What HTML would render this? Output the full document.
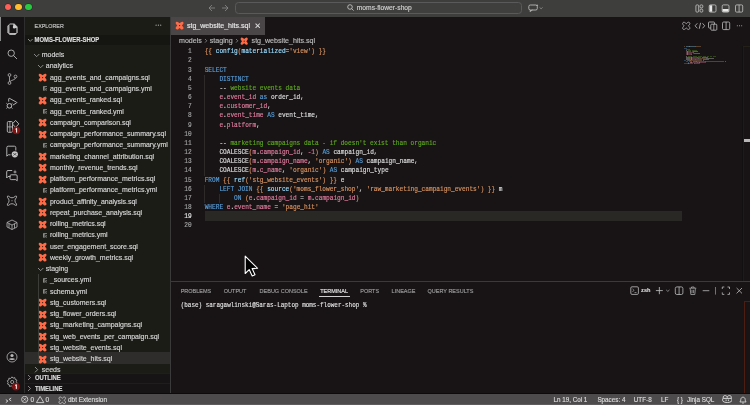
<!DOCTYPE html><html><head><meta charset="utf-8"><style>html,body{margin:0;padding:0;width:750px;height:405px;overflow:hidden;background:#181415;}body{position:relative;font-family:"Liberation Sans", sans-serif;}#root{position:absolute;left:0;top:0;width:750px;height:405px;overflow:hidden;will-change:transform}</style></head><body><div id="root"><div style="position:absolute;left:0px;top:0px;width:750px;height:17px;background:#3e3e3c;"></div><div style="position:absolute;left:4.8px;top:3.9000000000000004px;width:6.6px;height:6.6px;border-radius:50%;background:#fe5f57;box-shadow:0 0 0 0.5px rgba(0,0,0,0.35)"></div><div style="position:absolute;left:15.099999999999998px;top:3.9000000000000004px;width:6.6px;height:6.6px;border-radius:50%;background:#febc2e;box-shadow:0 0 0 0.5px rgba(0,0,0,0.35)"></div><div style="position:absolute;left:25.2px;top:3.9000000000000004px;width:6.6px;height:6.6px;border-radius:50%;background:#28c840;box-shadow:0 0 0 0.5px rgba(0,0,0,0.35)"></div><svg style="position:absolute;left:208px;top:4px" width="22" height="8" viewBox="0 0 22 8"><path d="M1,4 H7 M1,4 L4,1 M1,4 L4,7" stroke="#8a8a8a" stroke-width="0.8" fill="none"/><path d="M14,4 H20 M20,4 L17,1 M20,4 L17,7" stroke="#8a8a8a" stroke-width="0.8" fill="none"/></svg><div style="position:absolute;left:235.2px;top:1.5px;width:287px;height:12.1px;box-sizing:border-box;border:0.7px solid #5a5a5a;border-radius:3.5px;background:#3f3f3e"></div><svg style="position:absolute;left:347px;top:4.2px" width="7" height="7" viewBox="0 0 7 7"><circle cx="3" cy="3" r="2.3" stroke="#cfcfcf" stroke-width="0.8" fill="none"/><path d="M4.7,4.7 L6.6,6.6" stroke="#cfcfcf" stroke-width="0.8"/></svg><div style="position:absolute;left:356.8px;top:1.0px;height:13.4px;line-height:13.4px;font-family:'Liberation Sans', sans-serif;font-size:6.7px;color:#d0d0d0;font-weight:normal;white-space:pre;-webkit-text-stroke:0.15px #d0d0d0;">moms-flower-shop</div><svg style="position:absolute;left:527.5px;top:4px" width="16" height="8" viewBox="0 0 16 8"><rect x="0.8" y="1" width="8.5" height="5" rx="1.5" stroke="#c8c8c8" stroke-width="0.8" fill="none"/><path d="M2.5,6 L2,7.6 L4.5,6" stroke="#c8c8c8" stroke-width="0.7" fill="none"/><path d="M11.6,3.4 L13.1,4.8 L14.6,3.4" stroke="#b8b8b8" stroke-width="0.55" fill="none"/><path d="M9.2,0.2 L9.5,1 L10.3,1.3 L9.5,1.6 L9.2,2.4 L8.9,1.6 L8.1,1.3 L8.9,1 Z" fill="#d0d0d0"/></svg><svg style="position:absolute;left:695px;top:3.5px" width="50" height="9" viewBox="0 0 50 9"><rect x="0.9" y="0.9" width="2.8" height="7.2" rx="1" stroke="#c8c8c8" stroke-width="0.8" fill="none"/><rect x="5" y="0.9" width="2.8" height="3" rx="1" stroke="#c8c8c8" stroke-width="0.8" fill="none"/><rect x="5" y="5.1" width="2.8" height="3" rx="1" stroke="#c8c8c8" stroke-width="0.8" fill="none"/><rect x="14.2" y="0.9" width="6.8" height="7.2" rx="1.2" stroke="#c8c8c8" stroke-width="0.8" fill="none"/><rect x="14.6" y="1.3" width="2.6" height="6.4" fill="#e8e8e8"/><rect x="27.2" y="0.9" width="6.8" height="7.2" rx="1.2" stroke="#c8c8c8" stroke-width="0.8" fill="none"/><rect x="27.6" y="5" width="6" height="2.7" fill="#e8e8e8"/><rect x="40.5" y="0.9" width="7.2" height="7.2" rx="1.2" stroke="#c8c8c8" stroke-width="0.8" fill="none"/><path d="M44.1,1 V8" stroke="#c8c8c8" stroke-width="0.8"/></svg><div style="position:absolute;left:0px;top:17px;width:24px;height:377px;background:#171415;"></div><div style="position:absolute;left:24px;top:17px;width:0.8px;height:377px;background:#2e2e2e;"></div><div style="position:absolute;left:0px;top:17px;width:0.9px;height:24px;background:#8c8c8c;"></div><svg style="position:absolute;left:7px;top:22.5px" width="11" height="12.5" viewBox="0 0 11 12.5"><path d="M3,0.5 H7.3 L10.6,3.8 V9.6 L8,12.2 H3 L0.4,9.6 V3.1 Z" fill="#c4c4c4"/><path d="M2.4,1.6 H6.2 V5 H9.4 V9.9 H2.4 Z" fill="#171415"/><circle cx="7.3" cy="3.9" r="1.5" fill="#d0d0d0"/><path d="M1.6,3 V9.6 L3.2,11.1 H7.6" stroke="#8a8a8a" stroke-width="0.5" fill="none"/></svg><svg style="position:absolute;left:7px;top:49px" width="11" height="11" viewBox="0 0 11 11"><circle cx="4.2" cy="4.2" r="3.2" stroke="#b8b8b8" stroke-width="0.9" fill="none"/><path d="M6.5,6.5 L10,10" stroke="#b8b8b8" stroke-width="0.9"/></svg><svg style="position:absolute;left:7px;top:73px" width="11" height="12" viewBox="0 0 11 12"><circle cx="2.5" cy="2" r="1.4" stroke="#b8b8b8" stroke-width="0.8" fill="none"/><circle cx="2.5" cy="10" r="1.4" stroke="#b8b8b8" stroke-width="0.8" fill="none"/><circle cx="8.5" cy="3.5" r="1.4" stroke="#b8b8b8" stroke-width="0.8" fill="none"/><path d="M2.5,3.4 V8.6 M8.5,4.9 C8.5,7 4,7 2.8,8.7" stroke="#b8b8b8" stroke-width="0.8" fill="none"/></svg><svg style="position:absolute;left:0px;top:92px" width="24" height="20" viewBox="0 0 24 20"><path d="M8.7,9.6 V7 Q8.7,5.8 9.8,6.5 L16.5,10.2 Q17.2,10.6 16.5,11 L12.8,13.1" stroke="#b8b8b8" stroke-width="0.95" fill="none"/><circle cx="9.4" cy="13.8" r="2.3" stroke="#b8b8b8" stroke-width="1" fill="none"/><path d="M6.3,11.2 L7.6,12.3 M12.5,11.2 L11.2,12.3 M6.3,16.5 L7.6,15.4 M12.5,16.5 L11.2,15.4" stroke="#b8b8b8" stroke-width="0.8"/></svg><svg style="position:absolute;left:0px;top:117px" width="24" height="20" viewBox="0 0 24 20"><rect x="7.3" y="4.5" width="5.2" height="10.8" rx="1.2" stroke="#b8b8b8" stroke-width="0.95" fill="none"/><path d="M7.3,9.9 H12.5 M9.9,4.5 V15.3" stroke="#b8b8b8" stroke-width="0.8"/><path d="M15.6,3.4 L18.8,6.9 L15.6,10.4 L12.4,6.9 Z" stroke="#b8b8b8" stroke-width="0.95" fill="#171415"/><circle cx="16.3" cy="13.3" r="3.9" fill="#801212"/><path d="M15.4,12.2 L16.6,11.3 V15.6" stroke="#ffffff" stroke-width="1" fill="none"/></svg><svg style="position:absolute;left:0px;top:141px" width="24" height="20" viewBox="0 0 24 20"><path d="M10.5,13.8 H8.2 L6.8,15.2 V6.6 Q6.8,5.2 8.2,5.2 H14.4 Q15.8,5.2 15.8,6.6 V9.5" stroke="#b8b8b8" stroke-width="0.95" fill="none"/><circle cx="14.8" cy="13.3" r="3.1" fill="#c8c8c8"/><path d="M13.4,12.1 L14.6,13.3 L13.4,14.5 M16.2,12.1 L15,13.3 L16.2,14.5" stroke="#171415" stroke-width="0.7" fill="none"/></svg><svg style="position:absolute;left:0px;top:165px" width="24" height="20" viewBox="0 0 24 20"><path d="M10.5,11.5 H8 L6.7,13 V6.8 Q6.7,5.5 8,5.5 H12.2" stroke="#b8b8b8" stroke-width="0.95" fill="none"/><path d="M11.2,9.8 H16 Q17.2,9.8 17.2,11 V15.8 L15.8,14.6 H11.2 Q10,14.6 10,13.4 V11 Q10,9.8 11.2,9.8 Z" stroke="#b8b8b8" stroke-width="0.95" fill="none"/><path d="M15,4.6 L15.5,6.4 L17.2,6.9 L15.5,7.4 L15,9.1 L14.5,7.4 L12.8,6.9 L14.5,6.4 Z" fill="#b8b8b8"/></svg><svg style="position:absolute;left:6.3px;top:194.6px" width="12" height="11.5" viewBox="-0.2 -0.2 10.4 10.4"><path d="M2,0.9 Q5,3.8 8,0.9 Q9.7,0.3 9.1,2 Q6.2,5 9.1,8 Q9.7,9.7 8,9.1 Q5,6.2 2,9.1 Q0.3,9.7 0.9,8 Q3.8,5 0.9,2 Q0.3,0.3 2,0.9 Z" stroke="#b8b8b8" stroke-width="0.8" fill="none"/><circle cx="5" cy="5" r="0.55" fill="#b8b8b8"/></svg><svg style="position:absolute;left:6px;top:219px" width="12" height="11" viewBox="0 0 12 11"><path d="M1,3.5 L6,1 L11,3.5 V8 L6,10.5 L1,8 Z M1,3.5 L6,6 L11,3.5 M6,6 V10.5 M3,4.5 V9 M8.5,4.8 V9.2" stroke="#b8b8b8" stroke-width="0.8" fill="none"/></svg><svg style="position:absolute;left:6px;top:351px" width="12" height="12" viewBox="0 0 12 12"><circle cx="6" cy="6" r="5" stroke="#b8b8b8" stroke-width="0.8" fill="none"/><circle cx="6" cy="4.5" r="1.6" fill="#b8b8b8"/><path d="M3,8.2 C3.5,6.8 8.5,6.8 9,8.2 C8,9.2 4,9.2 3,8.2 Z" fill="#b8b8b8"/></svg><svg style="position:absolute;left:5.5px;top:375.5px" width="12" height="12" viewBox="0 0 12 12"><path d="M6,0.8 L7,2.2 L8.8,1.6 L9.2,3.4 L10.9,4.1 L10.2,5.8 L11.2,7.2 L9.6,8.1 L9.5,9.9 L7.7,9.6 L6.6,11.1 L5.3,9.9 L3.6,10.5 L3.2,8.7 L1.5,8 L2.2,6.3 L1.2,4.9 L2.8,4 L2.9,2.2 L4.7,2.5 Z" stroke="#b8b8b8" stroke-width="0.8" fill="none"/><circle cx="6.2" cy="6" r="1.6" stroke="#b8b8b8" stroke-width="0.8" fill="none"/></svg><svg style="position:absolute;left:0px;top:376px" width="24" height="18" viewBox="0 0 24 18"><circle cx="16" cy="10.6" r="3.9" fill="#801212"/><path d="M15.1,9.5 L16.3,8.6 V12.9" stroke="#ffffff" stroke-width="1" fill="none"/></svg><div style="position:absolute;left:24.8px;top:17px;width:145.7px;height:377px;background:#1c1c17;"></div><div style="position:absolute;left:34.6px;top:20.94px;height:10.72px;line-height:10.72px;font-family:'Liberation Sans', sans-serif;font-size:5.36px;color:#c0c0c0;font-weight:normal;white-space:pre;-webkit-text-stroke:0.15px #c0c0c0;transform:scaleY(1.15)">EXPLORER</div><svg style="position:absolute;left:155px;top:24.4px" width="7" height="2.4" viewBox="0 0 7 2.4"><circle cx="1.1" cy="1.2" r="0.6" fill="#b0b0b0"/><circle cx="3.4" cy="1.2" r="0.6" fill="#b0b0b0"/><circle cx="5.7" cy="1.2" r="0.6" fill="#b0b0b0"/></svg><div style="position:absolute;left:24.8px;top:35.3px;width:145.7px;height:9.6px;background:#151512;"></div><svg style="position:absolute;left:27.6px;top:39.3px;overflow:visible" width="4.6" height="2.3" viewBox="0 0 4.6 2.3"><polyline points="0,0 2.3,2.3 4.6,0" fill="none" stroke="#c0c0c0" stroke-width="0.7"/></svg><div style="position:absolute;left:34.6px;top:35.18px;height:11.84px;line-height:11.84px;font-family:'Liberation Sans', sans-serif;font-size:5.92px;color:#dcdcdc;font-weight:bold;white-space:pre;-webkit-text-stroke:0.15px #dcdcdc;transform:scaleY(1.18)">MOMS-FLOWER-SHOP</div><svg style="position:absolute;left:33.599999999999994px;top:53.7px;overflow:visible" width="5.3" height="2.65" viewBox="0 0 5.3 2.65"><polyline points="0,0 2.65,2.65 5.3,0" fill="none" stroke="#b8b8b8" stroke-width="0.7"/></svg><div style="position:absolute;left:41.8px;top:48.230000000000004px;height:13.94px;line-height:13.94px;font-family:'Liberation Sans', sans-serif;font-size:6.97px;color:#d6d6d6;font-weight:normal;white-space:pre;-webkit-text-stroke:0.15px #d6d6d6;">models</div><svg style="position:absolute;left:37.55px;top:64.96000000000001px;overflow:visible" width="5.3" height="2.65" viewBox="0 0 5.3 2.65"><polyline points="0,0 2.65,2.65 5.3,0" fill="none" stroke="#b8b8b8" stroke-width="0.7"/></svg><div style="position:absolute;left:45.75px;top:59.49000000000001px;height:13.94px;line-height:13.94px;font-family:'Liberation Sans', sans-serif;font-size:6.97px;color:#d6d6d6;font-weight:normal;white-space:pre;-webkit-text-stroke:0.15px #d6d6d6;">analytics</div><svg style="position:absolute;left:38.3px;top:73.22px" width="9.2" height="9.2" viewBox="0 0 10 10"><path d="M1.2,1.2 C2.4,0 3.6,1.2 5,2.5 C6.4,1.2 7.6,0 8.8,1.2 C10,2.4 8.8,3.6 7.5,5 C8.8,6.4 10,7.6 8.8,8.8 C7.6,10 6.4,8.8 5,7.5 C3.6,8.8 2.4,10 1.2,8.8 C0,7.6 1.2,6.4 2.5,5 C1.2,3.6 0,2.4 1.2,1.2 Z" fill="#ff6b47"/><circle cx="5" cy="5" r="0.7" fill="#3a1a10"/></svg><div style="position:absolute;left:49.9px;top:70.75px;height:13.94px;line-height:13.94px;font-family:'Liberation Sans', sans-serif;font-size:6.97px;color:#d6d6d6;font-weight:normal;white-space:pre;-webkit-text-stroke:0.15px #d6d6d6;">agg_events_and_campaigns.sql</div><svg style="position:absolute;left:42.8px;top:86.38000000000001px" width="4.4" height="5" viewBox="0 0 4.4 5"><path d="M0.4,0.5 H4 M0.4,1.7 H2.2 M0.4,2.9 H2 M0.4,4.1 H2.2 M0.5,0.5 V4.5" stroke="#a8a8a8" stroke-width="0.7" fill="none"/><circle cx="3.3" cy="3.4" r="0.9" stroke="#a8a8a8" stroke-width="0.6" fill="none"/></svg><div style="position:absolute;left:49.9px;top:82.01px;height:13.94px;line-height:13.94px;font-family:'Liberation Sans', sans-serif;font-size:6.97px;color:#d6d6d6;font-weight:normal;white-space:pre;-webkit-text-stroke:0.15px #d6d6d6;">agg_events_and_campaigns.yml</div><svg style="position:absolute;left:38.3px;top:95.74000000000001px" width="9.2" height="9.2" viewBox="0 0 10 10"><path d="M1.2,1.2 C2.4,0 3.6,1.2 5,2.5 C6.4,1.2 7.6,0 8.8,1.2 C10,2.4 8.8,3.6 7.5,5 C8.8,6.4 10,7.6 8.8,8.8 C7.6,10 6.4,8.8 5,7.5 C3.6,8.8 2.4,10 1.2,8.8 C0,7.6 1.2,6.4 2.5,5 C1.2,3.6 0,2.4 1.2,1.2 Z" fill="#ff6b47"/><circle cx="5" cy="5" r="0.7" fill="#3a1a10"/></svg><div style="position:absolute;left:49.9px;top:93.27000000000001px;height:13.94px;line-height:13.94px;font-family:'Liberation Sans', sans-serif;font-size:6.97px;color:#d6d6d6;font-weight:normal;white-space:pre;-webkit-text-stroke:0.15px #d6d6d6;">agg_events_ranked.sql</div><svg style="position:absolute;left:42.8px;top:108.9px" width="4.4" height="5" viewBox="0 0 4.4 5"><path d="M0.4,0.5 H4 M0.4,1.7 H2.2 M0.4,2.9 H2 M0.4,4.1 H2.2 M0.5,0.5 V4.5" stroke="#a8a8a8" stroke-width="0.7" fill="none"/><circle cx="3.3" cy="3.4" r="0.9" stroke="#a8a8a8" stroke-width="0.6" fill="none"/></svg><div style="position:absolute;left:49.9px;top:104.53px;height:13.94px;line-height:13.94px;font-family:'Liberation Sans', sans-serif;font-size:6.97px;color:#d6d6d6;font-weight:normal;white-space:pre;-webkit-text-stroke:0.15px #d6d6d6;">agg_events_ranked.yml</div><svg style="position:absolute;left:38.3px;top:118.26px" width="9.2" height="9.2" viewBox="0 0 10 10"><path d="M1.2,1.2 C2.4,0 3.6,1.2 5,2.5 C6.4,1.2 7.6,0 8.8,1.2 C10,2.4 8.8,3.6 7.5,5 C8.8,6.4 10,7.6 8.8,8.8 C7.6,10 6.4,8.8 5,7.5 C3.6,8.8 2.4,10 1.2,8.8 C0,7.6 1.2,6.4 2.5,5 C1.2,3.6 0,2.4 1.2,1.2 Z" fill="#ff6b47"/><circle cx="5" cy="5" r="0.7" fill="#3a1a10"/></svg><div style="position:absolute;left:49.9px;top:115.79px;height:13.94px;line-height:13.94px;font-family:'Liberation Sans', sans-serif;font-size:6.97px;color:#d6d6d6;font-weight:normal;white-space:pre;-webkit-text-stroke:0.15px #d6d6d6;">campaign_comparison.sql</div><svg style="position:absolute;left:38.3px;top:129.51999999999998px" width="9.2" height="9.2" viewBox="0 0 10 10"><path d="M1.2,1.2 C2.4,0 3.6,1.2 5,2.5 C6.4,1.2 7.6,0 8.8,1.2 C10,2.4 8.8,3.6 7.5,5 C8.8,6.4 10,7.6 8.8,8.8 C7.6,10 6.4,8.8 5,7.5 C3.6,8.8 2.4,10 1.2,8.8 C0,7.6 1.2,6.4 2.5,5 C1.2,3.6 0,2.4 1.2,1.2 Z" fill="#ff6b47"/><circle cx="5" cy="5" r="0.7" fill="#3a1a10"/></svg><div style="position:absolute;left:49.9px;top:127.04999999999998px;height:13.94px;line-height:13.94px;font-family:'Liberation Sans', sans-serif;font-size:6.97px;color:#d6d6d6;font-weight:normal;white-space:pre;-webkit-text-stroke:0.15px #d6d6d6;">campaign_performance_summary.sql</div><svg style="position:absolute;left:42.8px;top:142.68px" width="4.4" height="5" viewBox="0 0 4.4 5"><path d="M0.4,0.5 H4 M0.4,1.7 H2.2 M0.4,2.9 H2 M0.4,4.1 H2.2 M0.5,0.5 V4.5" stroke="#a8a8a8" stroke-width="0.7" fill="none"/><circle cx="3.3" cy="3.4" r="0.9" stroke="#a8a8a8" stroke-width="0.6" fill="none"/></svg><div style="position:absolute;left:49.9px;top:138.31px;height:13.94px;line-height:13.94px;font-family:'Liberation Sans', sans-serif;font-size:6.97px;color:#d6d6d6;font-weight:normal;white-space:pre;-webkit-text-stroke:0.15px #d6d6d6;">campaign_performance_summary.yml</div><svg style="position:absolute;left:38.3px;top:152.04000000000002px" width="9.2" height="9.2" viewBox="0 0 10 10"><path d="M1.2,1.2 C2.4,0 3.6,1.2 5,2.5 C6.4,1.2 7.6,0 8.8,1.2 C10,2.4 8.8,3.6 7.5,5 C8.8,6.4 10,7.6 8.8,8.8 C7.6,10 6.4,8.8 5,7.5 C3.6,8.8 2.4,10 1.2,8.8 C0,7.6 1.2,6.4 2.5,5 C1.2,3.6 0,2.4 1.2,1.2 Z" fill="#ff6b47"/><circle cx="5" cy="5" r="0.7" fill="#3a1a10"/></svg><div style="position:absolute;left:49.9px;top:149.57000000000002px;height:13.94px;line-height:13.94px;font-family:'Liberation Sans', sans-serif;font-size:6.97px;color:#d6d6d6;font-weight:normal;white-space:pre;-webkit-text-stroke:0.15px #d6d6d6;">marketing_channel_attribution.sql</div><svg style="position:absolute;left:38.3px;top:163.3px" width="9.2" height="9.2" viewBox="0 0 10 10"><path d="M1.2,1.2 C2.4,0 3.6,1.2 5,2.5 C6.4,1.2 7.6,0 8.8,1.2 C10,2.4 8.8,3.6 7.5,5 C8.8,6.4 10,7.6 8.8,8.8 C7.6,10 6.4,8.8 5,7.5 C3.6,8.8 2.4,10 1.2,8.8 C0,7.6 1.2,6.4 2.5,5 C1.2,3.6 0,2.4 1.2,1.2 Z" fill="#ff6b47"/><circle cx="5" cy="5" r="0.7" fill="#3a1a10"/></svg><div style="position:absolute;left:49.9px;top:160.83px;height:13.94px;line-height:13.94px;font-family:'Liberation Sans', sans-serif;font-size:6.97px;color:#d6d6d6;font-weight:normal;white-space:pre;-webkit-text-stroke:0.15px #d6d6d6;">monthly_revenue_trends.sql</div><svg style="position:absolute;left:38.3px;top:174.56px" width="9.2" height="9.2" viewBox="0 0 10 10"><path d="M1.2,1.2 C2.4,0 3.6,1.2 5,2.5 C6.4,1.2 7.6,0 8.8,1.2 C10,2.4 8.8,3.6 7.5,5 C8.8,6.4 10,7.6 8.8,8.8 C7.6,10 6.4,8.8 5,7.5 C3.6,8.8 2.4,10 1.2,8.8 C0,7.6 1.2,6.4 2.5,5 C1.2,3.6 0,2.4 1.2,1.2 Z" fill="#ff6b47"/><circle cx="5" cy="5" r="0.7" fill="#3a1a10"/></svg><div style="position:absolute;left:49.9px;top:172.09px;height:13.94px;line-height:13.94px;font-family:'Liberation Sans', sans-serif;font-size:6.97px;color:#d6d6d6;font-weight:normal;white-space:pre;-webkit-text-stroke:0.15px #d6d6d6;">platform_performance_metrics.sql</div><svg style="position:absolute;left:42.8px;top:187.72px" width="4.4" height="5" viewBox="0 0 4.4 5"><path d="M0.4,0.5 H4 M0.4,1.7 H2.2 M0.4,2.9 H2 M0.4,4.1 H2.2 M0.5,0.5 V4.5" stroke="#a8a8a8" stroke-width="0.7" fill="none"/><circle cx="3.3" cy="3.4" r="0.9" stroke="#a8a8a8" stroke-width="0.6" fill="none"/></svg><div style="position:absolute;left:49.9px;top:183.35px;height:13.94px;line-height:13.94px;font-family:'Liberation Sans', sans-serif;font-size:6.97px;color:#d6d6d6;font-weight:normal;white-space:pre;-webkit-text-stroke:0.15px #d6d6d6;">platform_performance_metrics.yml</div><svg style="position:absolute;left:38.3px;top:197.07999999999998px" width="9.2" height="9.2" viewBox="0 0 10 10"><path d="M1.2,1.2 C2.4,0 3.6,1.2 5,2.5 C6.4,1.2 7.6,0 8.8,1.2 C10,2.4 8.8,3.6 7.5,5 C8.8,6.4 10,7.6 8.8,8.8 C7.6,10 6.4,8.8 5,7.5 C3.6,8.8 2.4,10 1.2,8.8 C0,7.6 1.2,6.4 2.5,5 C1.2,3.6 0,2.4 1.2,1.2 Z" fill="#ff6b47"/><circle cx="5" cy="5" r="0.7" fill="#3a1a10"/></svg><div style="position:absolute;left:49.9px;top:194.60999999999999px;height:13.94px;line-height:13.94px;font-family:'Liberation Sans', sans-serif;font-size:6.97px;color:#d6d6d6;font-weight:normal;white-space:pre;-webkit-text-stroke:0.15px #d6d6d6;">product_affinity_analysis.sql</div><svg style="position:absolute;left:38.3px;top:208.33999999999997px" width="9.2" height="9.2" viewBox="0 0 10 10"><path d="M1.2,1.2 C2.4,0 3.6,1.2 5,2.5 C6.4,1.2 7.6,0 8.8,1.2 C10,2.4 8.8,3.6 7.5,5 C8.8,6.4 10,7.6 8.8,8.8 C7.6,10 6.4,8.8 5,7.5 C3.6,8.8 2.4,10 1.2,8.8 C0,7.6 1.2,6.4 2.5,5 C1.2,3.6 0,2.4 1.2,1.2 Z" fill="#ff6b47"/><circle cx="5" cy="5" r="0.7" fill="#3a1a10"/></svg><div style="position:absolute;left:49.9px;top:205.86999999999998px;height:13.94px;line-height:13.94px;font-family:'Liberation Sans', sans-serif;font-size:6.97px;color:#d6d6d6;font-weight:normal;white-space:pre;-webkit-text-stroke:0.15px #d6d6d6;">repeat_purchase_analysis.sql</div><svg style="position:absolute;left:38.3px;top:219.60000000000002px" width="9.2" height="9.2" viewBox="0 0 10 10"><path d="M1.2,1.2 C2.4,0 3.6,1.2 5,2.5 C6.4,1.2 7.6,0 8.8,1.2 C10,2.4 8.8,3.6 7.5,5 C8.8,6.4 10,7.6 8.8,8.8 C7.6,10 6.4,8.8 5,7.5 C3.6,8.8 2.4,10 1.2,8.8 C0,7.6 1.2,6.4 2.5,5 C1.2,3.6 0,2.4 1.2,1.2 Z" fill="#ff6b47"/><circle cx="5" cy="5" r="0.7" fill="#3a1a10"/></svg><div style="position:absolute;left:49.9px;top:217.13000000000002px;height:13.94px;line-height:13.94px;font-family:'Liberation Sans', sans-serif;font-size:6.97px;color:#d6d6d6;font-weight:normal;white-space:pre;-webkit-text-stroke:0.15px #d6d6d6;">rolling_metrics.sql</div><svg style="position:absolute;left:42.8px;top:232.76000000000002px" width="4.4" height="5" viewBox="0 0 4.4 5"><path d="M0.4,0.5 H4 M0.4,1.7 H2.2 M0.4,2.9 H2 M0.4,4.1 H2.2 M0.5,0.5 V4.5" stroke="#a8a8a8" stroke-width="0.7" fill="none"/><circle cx="3.3" cy="3.4" r="0.9" stroke="#a8a8a8" stroke-width="0.6" fill="none"/></svg><div style="position:absolute;left:49.9px;top:228.39000000000001px;height:13.94px;line-height:13.94px;font-family:'Liberation Sans', sans-serif;font-size:6.97px;color:#d6d6d6;font-weight:normal;white-space:pre;-webkit-text-stroke:0.15px #d6d6d6;">rolling_metrics.yml</div><svg style="position:absolute;left:38.3px;top:242.12px" width="9.2" height="9.2" viewBox="0 0 10 10"><path d="M1.2,1.2 C2.4,0 3.6,1.2 5,2.5 C6.4,1.2 7.6,0 8.8,1.2 C10,2.4 8.8,3.6 7.5,5 C8.8,6.4 10,7.6 8.8,8.8 C7.6,10 6.4,8.8 5,7.5 C3.6,8.8 2.4,10 1.2,8.8 C0,7.6 1.2,6.4 2.5,5 C1.2,3.6 0,2.4 1.2,1.2 Z" fill="#ff6b47"/><circle cx="5" cy="5" r="0.7" fill="#3a1a10"/></svg><div style="position:absolute;left:49.9px;top:239.65px;height:13.94px;line-height:13.94px;font-family:'Liberation Sans', sans-serif;font-size:6.97px;color:#d6d6d6;font-weight:normal;white-space:pre;-webkit-text-stroke:0.15px #d6d6d6;">user_engagement_score.sql</div><svg style="position:absolute;left:38.3px;top:253.38px" width="9.2" height="9.2" viewBox="0 0 10 10"><path d="M1.2,1.2 C2.4,0 3.6,1.2 5,2.5 C6.4,1.2 7.6,0 8.8,1.2 C10,2.4 8.8,3.6 7.5,5 C8.8,6.4 10,7.6 8.8,8.8 C7.6,10 6.4,8.8 5,7.5 C3.6,8.8 2.4,10 1.2,8.8 C0,7.6 1.2,6.4 2.5,5 C1.2,3.6 0,2.4 1.2,1.2 Z" fill="#ff6b47"/><circle cx="5" cy="5" r="0.7" fill="#3a1a10"/></svg><div style="position:absolute;left:49.9px;top:250.91px;height:13.94px;line-height:13.94px;font-family:'Liberation Sans', sans-serif;font-size:6.97px;color:#d6d6d6;font-weight:normal;white-space:pre;-webkit-text-stroke:0.15px #d6d6d6;">weekly_growth_metrics.sql</div><svg style="position:absolute;left:37.55px;top:267.64px;overflow:visible" width="5.3" height="2.65" viewBox="0 0 5.3 2.65"><polyline points="0,0 2.65,2.65 5.3,0" fill="none" stroke="#b8b8b8" stroke-width="0.7"/></svg><div style="position:absolute;left:45.75px;top:262.16999999999996px;height:13.94px;line-height:13.94px;font-family:'Liberation Sans', sans-serif;font-size:6.97px;color:#d6d6d6;font-weight:normal;white-space:pre;-webkit-text-stroke:0.15px #d6d6d6;">staging</div><svg style="position:absolute;left:42.8px;top:277.79999999999995px" width="4.4" height="5" viewBox="0 0 4.4 5"><path d="M0.4,0.5 H4 M0.4,1.7 H2.2 M0.4,2.9 H2 M0.4,4.1 H2.2 M0.5,0.5 V4.5" stroke="#a8a8a8" stroke-width="0.7" fill="none"/><circle cx="3.3" cy="3.4" r="0.9" stroke="#a8a8a8" stroke-width="0.6" fill="none"/></svg><div style="position:absolute;left:49.9px;top:273.42999999999995px;height:13.94px;line-height:13.94px;font-family:'Liberation Sans', sans-serif;font-size:6.97px;color:#d6d6d6;font-weight:normal;white-space:pre;-webkit-text-stroke:0.15px #d6d6d6;">_sources.yml</div><svg style="position:absolute;left:42.8px;top:289.06px" width="4.4" height="5" viewBox="0 0 4.4 5"><path d="M0.4,0.5 H4 M0.4,1.7 H2.2 M0.4,2.9 H2 M0.4,4.1 H2.2 M0.5,0.5 V4.5" stroke="#a8a8a8" stroke-width="0.7" fill="none"/><circle cx="3.3" cy="3.4" r="0.9" stroke="#a8a8a8" stroke-width="0.6" fill="none"/></svg><div style="position:absolute;left:49.9px;top:284.69px;height:13.94px;line-height:13.94px;font-family:'Liberation Sans', sans-serif;font-size:6.97px;color:#d6d6d6;font-weight:normal;white-space:pre;-webkit-text-stroke:0.15px #d6d6d6;">schema.yml</div><svg style="position:absolute;left:38.3px;top:298.42px" width="9.2" height="9.2" viewBox="0 0 10 10"><path d="M1.2,1.2 C2.4,0 3.6,1.2 5,2.5 C6.4,1.2 7.6,0 8.8,1.2 C10,2.4 8.8,3.6 7.5,5 C8.8,6.4 10,7.6 8.8,8.8 C7.6,10 6.4,8.8 5,7.5 C3.6,8.8 2.4,10 1.2,8.8 C0,7.6 1.2,6.4 2.5,5 C1.2,3.6 0,2.4 1.2,1.2 Z" fill="#ff6b47"/><circle cx="5" cy="5" r="0.7" fill="#3a1a10"/></svg><div style="position:absolute;left:49.9px;top:295.95px;height:13.94px;line-height:13.94px;font-family:'Liberation Sans', sans-serif;font-size:6.97px;color:#d6d6d6;font-weight:normal;white-space:pre;-webkit-text-stroke:0.15px #d6d6d6;">stg_customers.sql</div><svg style="position:absolute;left:38.3px;top:309.68px" width="9.2" height="9.2" viewBox="0 0 10 10"><path d="M1.2,1.2 C2.4,0 3.6,1.2 5,2.5 C6.4,1.2 7.6,0 8.8,1.2 C10,2.4 8.8,3.6 7.5,5 C8.8,6.4 10,7.6 8.8,8.8 C7.6,10 6.4,8.8 5,7.5 C3.6,8.8 2.4,10 1.2,8.8 C0,7.6 1.2,6.4 2.5,5 C1.2,3.6 0,2.4 1.2,1.2 Z" fill="#ff6b47"/><circle cx="5" cy="5" r="0.7" fill="#3a1a10"/></svg><div style="position:absolute;left:49.9px;top:307.21px;height:13.94px;line-height:13.94px;font-family:'Liberation Sans', sans-serif;font-size:6.97px;color:#d6d6d6;font-weight:normal;white-space:pre;-webkit-text-stroke:0.15px #d6d6d6;">stg_flower_orders.sql</div><svg style="position:absolute;left:38.3px;top:320.94px" width="9.2" height="9.2" viewBox="0 0 10 10"><path d="M1.2,1.2 C2.4,0 3.6,1.2 5,2.5 C6.4,1.2 7.6,0 8.8,1.2 C10,2.4 8.8,3.6 7.5,5 C8.8,6.4 10,7.6 8.8,8.8 C7.6,10 6.4,8.8 5,7.5 C3.6,8.8 2.4,10 1.2,8.8 C0,7.6 1.2,6.4 2.5,5 C1.2,3.6 0,2.4 1.2,1.2 Z" fill="#ff6b47"/><circle cx="5" cy="5" r="0.7" fill="#3a1a10"/></svg><div style="position:absolute;left:49.9px;top:318.46999999999997px;height:13.94px;line-height:13.94px;font-family:'Liberation Sans', sans-serif;font-size:6.97px;color:#d6d6d6;font-weight:normal;white-space:pre;-webkit-text-stroke:0.15px #d6d6d6;">stg_marketing_campaigns.sql</div><svg style="position:absolute;left:38.3px;top:332.2px" width="9.2" height="9.2" viewBox="0 0 10 10"><path d="M1.2,1.2 C2.4,0 3.6,1.2 5,2.5 C6.4,1.2 7.6,0 8.8,1.2 C10,2.4 8.8,3.6 7.5,5 C8.8,6.4 10,7.6 8.8,8.8 C7.6,10 6.4,8.8 5,7.5 C3.6,8.8 2.4,10 1.2,8.8 C0,7.6 1.2,6.4 2.5,5 C1.2,3.6 0,2.4 1.2,1.2 Z" fill="#ff6b47"/><circle cx="5" cy="5" r="0.7" fill="#3a1a10"/></svg><div style="position:absolute;left:49.9px;top:329.72999999999996px;height:13.94px;line-height:13.94px;font-family:'Liberation Sans', sans-serif;font-size:6.97px;color:#d6d6d6;font-weight:normal;white-space:pre;-webkit-text-stroke:0.15px #d6d6d6;">stg_web_events_per_campaign.sql</div><svg style="position:absolute;left:38.3px;top:343.46px" width="9.2" height="9.2" viewBox="0 0 10 10"><path d="M1.2,1.2 C2.4,0 3.6,1.2 5,2.5 C6.4,1.2 7.6,0 8.8,1.2 C10,2.4 8.8,3.6 7.5,5 C8.8,6.4 10,7.6 8.8,8.8 C7.6,10 6.4,8.8 5,7.5 C3.6,8.8 2.4,10 1.2,8.8 C0,7.6 1.2,6.4 2.5,5 C1.2,3.6 0,2.4 1.2,1.2 Z" fill="#ff6b47"/><circle cx="5" cy="5" r="0.7" fill="#3a1a10"/></svg><div style="position:absolute;left:49.9px;top:340.98999999999995px;height:13.94px;line-height:13.94px;font-family:'Liberation Sans', sans-serif;font-size:6.97px;color:#d6d6d6;font-weight:normal;white-space:pre;-webkit-text-stroke:0.15px #d6d6d6;">stg_website_events.sql</div><div style="position:absolute;left:24.8px;top:352.32px;width:145.7px;height:11.7px;background:#2e2d2b;"></div><svg style="position:absolute;left:38.3px;top:354.71999999999997px" width="9.2" height="9.2" viewBox="0 0 10 10"><path d="M1.2,1.2 C2.4,0 3.6,1.2 5,2.5 C6.4,1.2 7.6,0 8.8,1.2 C10,2.4 8.8,3.6 7.5,5 C8.8,6.4 10,7.6 8.8,8.8 C7.6,10 6.4,8.8 5,7.5 C3.6,8.8 2.4,10 1.2,8.8 C0,7.6 1.2,6.4 2.5,5 C1.2,3.6 0,2.4 1.2,1.2 Z" fill="#ff6b47"/><circle cx="5" cy="5" r="0.7" fill="#3a1a10"/></svg><div style="position:absolute;left:49.9px;top:352.24999999999994px;height:13.94px;line-height:13.94px;font-family:'Liberation Sans', sans-serif;font-size:6.97px;color:#d6d6d6;font-weight:normal;white-space:pre;-webkit-text-stroke:0.15px #d6d6d6;">stg_website_hits.sql</div><svg style="position:absolute;left:34.9px;top:367.0px;overflow:visible" width="2.65" height="5.3" viewBox="0 0 2.65 5.3"><polyline points="0,0 2.65,2.65 0,5.3" fill="none" stroke="#b8b8b8" stroke-width="0.7"/></svg><div style="position:absolute;left:41.8px;top:362.63px;height:13.94px;line-height:13.94px;font-family:'Liberation Sans', sans-serif;font-size:6.97px;color:#d6d6d6;font-weight:normal;white-space:pre;-webkit-text-stroke:0.15px #d6d6d6;">seeds</div><div style="position:absolute;left:38.35px;top:273.9px;width:0.7px;height:89.4px;background:#3c3c38;"></div><div style="position:absolute;left:24.8px;top:373px;width:145.7px;height:20.5px;background:#171415;"></div><div style="position:absolute;left:24.8px;top:372.8px;width:145.7px;height:0.6px;background:#1f1d1d;"></div><div style="position:absolute;left:24.8px;top:383.2px;width:145.7px;height:0.6px;background:#1f1d1d;"></div><svg style="position:absolute;left:28.2px;top:375.3px;overflow:visible" width="2.5" height="5" viewBox="0 0 2.5 5"><polyline points="0,0 2.5,2.5 0,5" fill="none" stroke="#b0b0b0" stroke-width="0.7"/></svg><div style="position:absolute;left:34.9px;top:373.38px;height:11.84px;line-height:11.84px;font-family:'Liberation Sans', sans-serif;font-size:5.92px;color:#d8d8d8;font-weight:bold;white-space:pre;-webkit-text-stroke:0.15px #d8d8d8;transform:scaleY(1.18)">OUTLINE</div><svg style="position:absolute;left:28.2px;top:386.3px;overflow:visible" width="2.5" height="5" viewBox="0 0 2.5 5"><polyline points="0,0 2.5,2.5 0,5" fill="none" stroke="#b0b0b0" stroke-width="0.7"/></svg><div style="position:absolute;left:34.9px;top:384.47999999999996px;height:11.84px;line-height:11.84px;font-family:'Liberation Sans', sans-serif;font-size:5.92px;color:#d8d8d8;font-weight:bold;white-space:pre;-webkit-text-stroke:0.15px #d8d8d8;transform:scaleY(1.18)">TIMELINE</div><div style="position:absolute;left:170.2px;top:17px;width:0.9px;height:377px;background:#3a3a3a;"></div><div style="position:absolute;left:171px;top:17px;width:579px;height:18px;background:#181415;"></div><div style="position:absolute;left:171px;top:17px;width:93.5px;height:17.9px;background:#4a4647;"></div><svg style="position:absolute;left:175.3px;top:21.1px" width="9.2" height="9.2" viewBox="0 0 10 10"><path d="M1.2,1.2 C2.4,0 3.6,1.2 5,2.5 C6.4,1.2 7.6,0 8.8,1.2 C10,2.4 8.8,3.6 7.5,5 C8.8,6.4 10,7.6 8.8,8.8 C7.6,10 6.4,8.8 5,7.5 C3.6,8.8 2.4,10 1.2,8.8 C0,7.6 1.2,6.4 2.5,5 C1.2,3.6 0,2.4 1.2,1.2 Z" fill="#ff6b47"/><circle cx="5" cy="5" r="0.7" fill="#3a1a10"/></svg><div style="position:absolute;left:186.9px;top:18.53px;height:14.14px;line-height:14.14px;font-family:'Liberation Sans', sans-serif;font-size:7.07px;color:#e8e8e8;font-weight:normal;white-space:pre;-webkit-text-stroke:0.15px #e8e8e8;">stg_website_hits.sql</div><svg style="position:absolute;left:254.6px;top:23px" width="5.4" height="5.4" viewBox="0 0 5 5"><path d="M0.5,0.5 L4.5,4.5 M4.5,0.5 L0.5,4.5" stroke="#d8d8d8" stroke-width="0.95"/></svg><svg style="position:absolute;left:681px;top:21px" width="63" height="10" viewBox="0 0 63 10"><g transform="translate(1,0.6) scale(0.85)"><path d="M1.2,1.2 C2.4,0 3.6,1.2 5,2.5 C6.4,1.2 7.6,0 8.8,1.2 C10,2.4 8.8,3.6 7.5,5 C8.8,6.4 10,7.6 8.8,8.8 C7.6,10 6.4,8.8 5,7.5 C3.6,8.8 2.4,10 1.2,8.8 C0,7.6 1.2,6.4 2.5,5 C1.2,3.6 0,2.4 1.2,1.2 Z" stroke="#c0c0c0" stroke-width="0.9" fill="none"/></g><path d="M16.3,2.3 L14.1,4.8 L16.3,7.3 M19.6,1.8 L18.2,7.8 M21.5,2.3 L23.7,4.8 L21.5,7.3" stroke="#c0c0c0" stroke-width="0.8" fill="none"/><rect x="27.5" y="1" width="6" height="6" rx="0.8" stroke="#c0c0c0" stroke-width="0.8" fill="none"/><rect x="29.8" y="3.2" width="6" height="6" rx="0.8" stroke="#c0c0c0" stroke-width="0.8" fill="#181415"/><path d="M32.8,3.2 V9.2" stroke="#c0c0c0" stroke-width="0.7"/><rect x="41.5" y="1" width="7.2" height="7.6" rx="1.2" stroke="#c0c0c0" stroke-width="0.8" fill="none"/><path d="M45.1,1 V8.6" stroke="#c0c0c0" stroke-width="0.8"/><circle cx="56.3" cy="4.8" r="0.5" fill="#c0c0c0"/><circle cx="58.5" cy="4.8" r="0.5" fill="#c0c0c0"/><circle cx="60.7" cy="4.8" r="0.5" fill="#c0c0c0"/></svg><div style="position:absolute;left:179px;top:33.699999999999996px;height:14.2px;line-height:14.2px;font-family:'Liberation Sans', sans-serif;font-size:7.1px;color:#bcbcbc;font-weight:normal;white-space:pre;-webkit-text-stroke:0.15px #bcbcbc;">models</div><svg style="position:absolute;left:204.5px;top:39px;overflow:visible" width="1.8" height="3.6" viewBox="0 0 1.8 3.6"><polyline points="0,0 1.8,1.8 0,3.6" fill="none" stroke="#a0a0a0" stroke-width="0.7"/></svg><div style="position:absolute;left:209.8px;top:33.699999999999996px;height:14.2px;line-height:14.2px;font-family:'Liberation Sans', sans-serif;font-size:7.1px;color:#bcbcbc;font-weight:normal;white-space:pre;-webkit-text-stroke:0.15px #bcbcbc;">staging</div><svg style="position:absolute;left:235.6px;top:39px;overflow:visible" width="1.8" height="3.6" viewBox="0 0 1.8 3.6"><polyline points="0,0 1.8,1.8 0,3.6" fill="none" stroke="#a0a0a0" stroke-width="0.7"/></svg><svg style="position:absolute;left:240.4px;top:36.5px" width="8.4" height="8.4" viewBox="0 0 10 10"><path d="M1.2,1.2 C2.4,0 3.6,1.2 5,2.5 C6.4,1.2 7.6,0 8.8,1.2 C10,2.4 8.8,3.6 7.5,5 C8.8,6.4 10,7.6 8.8,8.8 C7.6,10 6.4,8.8 5,7.5 C3.6,8.8 2.4,10 1.2,8.8 C0,7.6 1.2,6.4 2.5,5 C1.2,3.6 0,2.4 1.2,1.2 Z" fill="#ff6b47"/><circle cx="5" cy="5" r="0.7" fill="#3a1a10"/></svg><div style="position:absolute;left:251.6px;top:33.699999999999996px;height:14.2px;line-height:14.2px;font-family:'Liberation Sans', sans-serif;font-size:7.1px;color:#bcbcbc;font-weight:normal;white-space:pre;-webkit-text-stroke:0.15px #bcbcbc;">stg_website_hits.sql</div><div style="position:absolute;left:204.7px;top:211.4px;width:477.7px;height:9.6px;background:#2a2825;"></div><div style="position:absolute;left:203.89999999999998px;top:74.71px;width:0.7px;height:100.87px;background:#2e2a2a;"></div><div style="position:absolute;left:203.89999999999998px;top:184.75000000000003px;width:0.7px;height:18.34px;background:#2e2a2a;"></div><div style="position:absolute;left:218.652px;top:193.92000000000002px;width:0.7px;height:9.17px;background:#2e2a2a;"></div><div style="position:absolute;left:150px;width:41.6px;text-align:right;top:46.253px;height:12.294px;line-height:12.294px;font-family:'Liberation Mono', monospace;font-size:6.147px;color:#a4a4a4;transform:scaleY(1.15);-webkit-text-stroke:0.15px currentColor">1</div><div style="position:absolute;left:204.7px;top:46.253px;height:12.294px;line-height:12.294px;font-family:'Liberation Mono', monospace;font-size:6.147px;white-space:pre;transform:scaleY(1.15);-webkit-text-stroke:0.15px"><span style="color:#d8935f">{{ </span><span style="color:#9cdcfe">config</span><span style="color:#d8935f">(</span><span style="color:#9cdcfe">materialized</span><span style="color:#dcdcdc">=</span><span style="color:#d8935f">&#x27;view&#x27;</span><span style="color:#d8935f">)</span><span style="color:#d8935f"> }}</span></div><div style="position:absolute;left:150px;width:41.6px;text-align:right;top:55.423px;height:12.294px;line-height:12.294px;font-family:'Liberation Mono', monospace;font-size:6.147px;color:#a4a4a4;transform:scaleY(1.15);-webkit-text-stroke:0.15px currentColor">2</div><div style="position:absolute;left:150px;width:41.6px;text-align:right;top:64.59299999999999px;height:12.294px;line-height:12.294px;font-family:'Liberation Mono', monospace;font-size:6.147px;color:#a4a4a4;transform:scaleY(1.15);-webkit-text-stroke:0.15px currentColor">3</div><div style="position:absolute;left:204.7px;top:64.59299999999999px;height:12.294px;line-height:12.294px;font-family:'Liberation Mono', monospace;font-size:6.147px;white-space:pre;transform:scaleY(1.15);-webkit-text-stroke:0.15px"><span style="color:#569cd6">SELECT</span></div><div style="position:absolute;left:150px;width:41.6px;text-align:right;top:73.76299999999999px;height:12.294px;line-height:12.294px;font-family:'Liberation Mono', monospace;font-size:6.147px;color:#a4a4a4;transform:scaleY(1.15);-webkit-text-stroke:0.15px currentColor">4</div><div style="position:absolute;left:204.7px;top:73.76299999999999px;height:12.294px;line-height:12.294px;font-family:'Liberation Mono', monospace;font-size:6.147px;white-space:pre;transform:scaleY(1.15);-webkit-text-stroke:0.15px"><span style="color:#dcdcdc">    </span><span style="color:#569cd6">DISTINCT</span></div><div style="position:absolute;left:150px;width:41.6px;text-align:right;top:82.93299999999999px;height:12.294px;line-height:12.294px;font-family:'Liberation Mono', monospace;font-size:6.147px;color:#a4a4a4;transform:scaleY(1.15);-webkit-text-stroke:0.15px currentColor">5</div><div style="position:absolute;left:204.7px;top:82.93299999999999px;height:12.294px;line-height:12.294px;font-family:'Liberation Mono', monospace;font-size:6.147px;white-space:pre;transform:scaleY(1.15);-webkit-text-stroke:0.15px"><span style="color:#dcdcdc">    </span><span style="color:#dcdcdc">-- </span><span style="color:#5ca61e">website events data</span></div><div style="position:absolute;left:150px;width:41.6px;text-align:right;top:92.103px;height:12.294px;line-height:12.294px;font-family:'Liberation Mono', monospace;font-size:6.147px;color:#a4a4a4;transform:scaleY(1.15);-webkit-text-stroke:0.15px currentColor">6</div><div style="position:absolute;left:204.7px;top:92.103px;height:12.294px;line-height:12.294px;font-family:'Liberation Mono', monospace;font-size:6.147px;white-space:pre;transform:scaleY(1.15);-webkit-text-stroke:0.15px"><span style="color:#dcdcdc">    </span><span style="color:#e07c9e">e</span><span style="color:#dcdcdc">.</span><span style="color:#e07c9e">event_id</span><span style="color:#dcdcdc"> </span><span style="color:#569cd6">as</span><span style="color:#dcdcdc"> order_id,</span></div><div style="position:absolute;left:150px;width:41.6px;text-align:right;top:101.27299999999998px;height:12.294px;line-height:12.294px;font-family:'Liberation Mono', monospace;font-size:6.147px;color:#a4a4a4;transform:scaleY(1.15);-webkit-text-stroke:0.15px currentColor">7</div><div style="position:absolute;left:204.7px;top:101.27299999999998px;height:12.294px;line-height:12.294px;font-family:'Liberation Mono', monospace;font-size:6.147px;white-space:pre;transform:scaleY(1.15);-webkit-text-stroke:0.15px"><span style="color:#dcdcdc">    </span><span style="color:#e07c9e">e</span><span style="color:#dcdcdc">.</span><span style="color:#e07c9e">customer_id</span><span style="color:#dcdcdc">,</span></div><div style="position:absolute;left:150px;width:41.6px;text-align:right;top:110.443px;height:12.294px;line-height:12.294px;font-family:'Liberation Mono', monospace;font-size:6.147px;color:#a4a4a4;transform:scaleY(1.15);-webkit-text-stroke:0.15px currentColor">8</div><div style="position:absolute;left:204.7px;top:110.443px;height:12.294px;line-height:12.294px;font-family:'Liberation Mono', monospace;font-size:6.147px;white-space:pre;transform:scaleY(1.15);-webkit-text-stroke:0.15px"><span style="color:#dcdcdc">    </span><span style="color:#e07c9e">e</span><span style="color:#dcdcdc">.</span><span style="color:#e07c9e">event_time</span><span style="color:#dcdcdc"> </span><span style="color:#569cd6">AS</span><span style="color:#dcdcdc"> event_time,</span></div><div style="position:absolute;left:150px;width:41.6px;text-align:right;top:119.61299999999999px;height:12.294px;line-height:12.294px;font-family:'Liberation Mono', monospace;font-size:6.147px;color:#a4a4a4;transform:scaleY(1.15);-webkit-text-stroke:0.15px currentColor">9</div><div style="position:absolute;left:204.7px;top:119.61299999999999px;height:12.294px;line-height:12.294px;font-family:'Liberation Mono', monospace;font-size:6.147px;white-space:pre;transform:scaleY(1.15);-webkit-text-stroke:0.15px"><span style="color:#dcdcdc">    </span><span style="color:#e07c9e">e</span><span style="color:#dcdcdc">.</span><span style="color:#e07c9e">platform</span><span style="color:#dcdcdc">,</span></div><div style="position:absolute;left:150px;width:41.6px;text-align:right;top:128.78300000000002px;height:12.294px;line-height:12.294px;font-family:'Liberation Mono', monospace;font-size:6.147px;color:#a4a4a4;transform:scaleY(1.15);-webkit-text-stroke:0.15px currentColor">10</div><div style="position:absolute;left:150px;width:41.6px;text-align:right;top:137.953px;height:12.294px;line-height:12.294px;font-family:'Liberation Mono', monospace;font-size:6.147px;color:#a4a4a4;transform:scaleY(1.15);-webkit-text-stroke:0.15px currentColor">11</div><div style="position:absolute;left:204.7px;top:137.953px;height:12.294px;line-height:12.294px;font-family:'Liberation Mono', monospace;font-size:6.147px;white-space:pre;transform:scaleY(1.15);-webkit-text-stroke:0.15px"><span style="color:#dcdcdc">    </span><span style="color:#dcdcdc">-- </span><span style="color:#5ca61e">marketing campaigns data - if doesn&#x27;t exist than organic</span></div><div style="position:absolute;left:150px;width:41.6px;text-align:right;top:147.12300000000002px;height:12.294px;line-height:12.294px;font-family:'Liberation Mono', monospace;font-size:6.147px;color:#a4a4a4;transform:scaleY(1.15);-webkit-text-stroke:0.15px currentColor">12</div><div style="position:absolute;left:204.7px;top:147.12300000000002px;height:12.294px;line-height:12.294px;font-family:'Liberation Mono', monospace;font-size:6.147px;white-space:pre;transform:scaleY(1.15);-webkit-text-stroke:0.15px"><span style="color:#dcdcdc">    </span><span style="color:#dcdcdc">COALESCE</span><span style="color:#d8935f">(</span><span style="color:#e07c9e">m</span><span style="color:#dcdcdc">.</span><span style="color:#e07c9e">campaign_id</span><span style="color:#dcdcdc">, </span><span style="color:#e07c9e">-1</span><span style="color:#d8935f">)</span><span style="color:#dcdcdc"> </span><span style="color:#569cd6">AS</span><span style="color:#dcdcdc"> campaign_id,</span></div><div style="position:absolute;left:150px;width:41.6px;text-align:right;top:156.293px;height:12.294px;line-height:12.294px;font-family:'Liberation Mono', monospace;font-size:6.147px;color:#a4a4a4;transform:scaleY(1.15);-webkit-text-stroke:0.15px currentColor">13</div><div style="position:absolute;left:204.7px;top:156.293px;height:12.294px;line-height:12.294px;font-family:'Liberation Mono', monospace;font-size:6.147px;white-space:pre;transform:scaleY(1.15);-webkit-text-stroke:0.15px"><span style="color:#dcdcdc">    </span><span style="color:#dcdcdc">COALESCE</span><span style="color:#d8935f">(</span><span style="color:#e07c9e">m</span><span style="color:#dcdcdc">.</span><span style="color:#e07c9e">campaign_name</span><span style="color:#dcdcdc">, </span><span style="color:#d8935f">&#x27;organic&#x27;</span><span style="color:#d8935f">)</span><span style="color:#dcdcdc"> </span><span style="color:#569cd6">AS</span><span style="color:#dcdcdc"> campaign_name,</span></div><div style="position:absolute;left:150px;width:41.6px;text-align:right;top:165.463px;height:12.294px;line-height:12.294px;font-family:'Liberation Mono', monospace;font-size:6.147px;color:#a4a4a4;transform:scaleY(1.15);-webkit-text-stroke:0.15px currentColor">14</div><div style="position:absolute;left:204.7px;top:165.463px;height:12.294px;line-height:12.294px;font-family:'Liberation Mono', monospace;font-size:6.147px;white-space:pre;transform:scaleY(1.15);-webkit-text-stroke:0.15px"><span style="color:#dcdcdc">    </span><span style="color:#dcdcdc">COALESCE</span><span style="color:#d8935f">(</span><span style="color:#e07c9e">m</span><span style="color:#dcdcdc">.</span><span style="color:#e07c9e">c_name</span><span style="color:#dcdcdc">, </span><span style="color:#d8935f">&#x27;organic&#x27;</span><span style="color:#d8935f">)</span><span style="color:#dcdcdc"> </span><span style="color:#569cd6">AS</span><span style="color:#dcdcdc"> campaign_type</span></div><div style="position:absolute;left:150px;width:41.6px;text-align:right;top:174.633px;height:12.294px;line-height:12.294px;font-family:'Liberation Mono', monospace;font-size:6.147px;color:#a4a4a4;transform:scaleY(1.15);-webkit-text-stroke:0.15px currentColor">15</div><div style="position:absolute;left:204.7px;top:174.633px;height:12.294px;line-height:12.294px;font-family:'Liberation Mono', monospace;font-size:6.147px;white-space:pre;transform:scaleY(1.15);-webkit-text-stroke:0.15px"><span style="color:#569cd6">FROM</span><span style="color:#d8935f"> {{ </span><span style="color:#9cdcfe">ref</span><span style="color:#d8935f">(</span><span style="color:#d8935f">&#x27;stg_website_events&#x27;</span><span style="color:#d8935f">)</span><span style="color:#d8935f"> }}</span><span style="color:#dcdcdc"> e</span></div><div style="position:absolute;left:150px;width:41.6px;text-align:right;top:183.80300000000003px;height:12.294px;line-height:12.294px;font-family:'Liberation Mono', monospace;font-size:6.147px;color:#a4a4a4;transform:scaleY(1.15);-webkit-text-stroke:0.15px currentColor">16</div><div style="position:absolute;left:204.7px;top:183.80300000000003px;height:12.294px;line-height:12.294px;font-family:'Liberation Mono', monospace;font-size:6.147px;white-space:pre;transform:scaleY(1.15);-webkit-text-stroke:0.15px"><span style="color:#dcdcdc">    </span><span style="color:#569cd6">LEFT JOIN</span><span style="color:#d8935f"> {{ </span><span style="color:#9cdcfe">source</span><span style="color:#d8935f">(</span><span style="color:#d8935f">&#x27;moms_flower_shop&#x27;</span><span style="color:#dcdcdc">, </span><span style="color:#d8935f">&#x27;raw_marketing_campaign_events&#x27;</span><span style="color:#d8935f">)</span><span style="color:#d8935f"> }}</span><span style="color:#dcdcdc"> m</span></div><div style="position:absolute;left:150px;width:41.6px;text-align:right;top:192.973px;height:12.294px;line-height:12.294px;font-family:'Liberation Mono', monospace;font-size:6.147px;color:#a4a4a4;transform:scaleY(1.15);-webkit-text-stroke:0.15px currentColor">17</div><div style="position:absolute;left:204.7px;top:192.973px;height:12.294px;line-height:12.294px;font-family:'Liberation Mono', monospace;font-size:6.147px;white-space:pre;transform:scaleY(1.15);-webkit-text-stroke:0.15px"><span style="color:#dcdcdc">        </span><span style="color:#569cd6">ON</span><span style="color:#dcdcdc"> </span><span style="color:#d8935f">(</span><span style="color:#e07c9e">e</span><span style="color:#dcdcdc">.</span><span style="color:#e07c9e">campaign_id</span><span style="color:#dcdcdc"> = </span><span style="color:#e07c9e">m</span><span style="color:#dcdcdc">.</span><span style="color:#e07c9e">campaign_id</span><span style="color:#d8935f">)</span></div><div style="position:absolute;left:150px;width:41.6px;text-align:right;top:202.143px;height:12.294px;line-height:12.294px;font-family:'Liberation Mono', monospace;font-size:6.147px;color:#a4a4a4;transform:scaleY(1.15);-webkit-text-stroke:0.15px currentColor">18</div><div style="position:absolute;left:204.7px;top:202.143px;height:12.294px;line-height:12.294px;font-family:'Liberation Mono', monospace;font-size:6.147px;white-space:pre;transform:scaleY(1.15);-webkit-text-stroke:0.15px"><span style="color:#569cd6">WHERE</span><span style="color:#dcdcdc"> </span><span style="color:#e07c9e">e</span><span style="color:#dcdcdc">.</span><span style="color:#e07c9e">event_name</span><span style="color:#dcdcdc"> = </span><span style="color:#d8935f">&#x27;page_hit&#x27;</span></div><div style="position:absolute;left:150px;width:41.6px;text-align:right;top:211.31300000000002px;height:12.294px;line-height:12.294px;font-family:'Liberation Mono', monospace;font-size:6.147px;color:#e8e8e8;transform:scaleY(1.15);-webkit-text-stroke:0.15px currentColor">19</div><div style="position:absolute;left:150px;width:41.6px;text-align:right;top:220.483px;height:12.294px;line-height:12.294px;font-family:'Liberation Mono', monospace;font-size:6.147px;color:#a4a4a4;transform:scaleY(1.15);-webkit-text-stroke:0.15px currentColor">20</div><div style="position:absolute;left:684.00px;top:46.00px;width:1.02px;height:0.75px;background:#d8935f;opacity:0.34"></div><div style="position:absolute;left:685.53px;top:46.00px;width:3.06px;height:0.75px;background:#9cdcfe;opacity:0.34"></div><div style="position:absolute;left:688.59px;top:46.00px;width:0.51px;height:0.75px;background:#d8935f;opacity:0.34"></div><div style="position:absolute;left:689.10px;top:46.00px;width:6.12px;height:0.75px;background:#9cdcfe;opacity:0.34"></div><div style="position:absolute;left:695.22px;top:46.00px;width:0.51px;height:0.75px;background:#dcdcdc;opacity:0.34"></div><div style="position:absolute;left:695.73px;top:46.00px;width:3.06px;height:0.75px;background:#d8935f;opacity:0.34"></div><div style="position:absolute;left:698.79px;top:46.00px;width:0.51px;height:0.75px;background:#d8935f;opacity:0.34"></div><div style="position:absolute;left:699.81px;top:46.00px;width:1.02px;height:0.75px;background:#d8935f;opacity:0.34"></div><div style="position:absolute;left:684.00px;top:48.04px;width:3.06px;height:0.75px;background:#569cd6;opacity:0.34"></div><div style="position:absolute;left:686.04px;top:49.06px;width:4.08px;height:0.75px;background:#569cd6;opacity:0.34"></div><div style="position:absolute;left:686.04px;top:50.08px;width:1.02px;height:0.75px;background:#dcdcdc;opacity:0.34"></div><div style="position:absolute;left:687.57px;top:50.08px;width:3.57px;height:0.75px;background:#5ca61e;opacity:0.34"></div><div style="position:absolute;left:691.65px;top:50.08px;width:3.06px;height:0.75px;background:#5ca61e;opacity:0.34"></div><div style="position:absolute;left:695.22px;top:50.08px;width:2.04px;height:0.75px;background:#5ca61e;opacity:0.34"></div><div style="position:absolute;left:686.04px;top:51.10px;width:0.51px;height:0.75px;background:#e07c9e;opacity:0.34"></div><div style="position:absolute;left:686.55px;top:51.10px;width:0.51px;height:0.75px;background:#dcdcdc;opacity:0.34"></div><div style="position:absolute;left:687.06px;top:51.10px;width:4.08px;height:0.75px;background:#e07c9e;opacity:0.34"></div><div style="position:absolute;left:691.65px;top:51.10px;width:1.02px;height:0.75px;background:#569cd6;opacity:0.34"></div><div style="position:absolute;left:693.18px;top:51.10px;width:4.59px;height:0.75px;background:#dcdcdc;opacity:0.34"></div><div style="position:absolute;left:686.04px;top:52.12px;width:0.51px;height:0.75px;background:#e07c9e;opacity:0.34"></div><div style="position:absolute;left:686.55px;top:52.12px;width:0.51px;height:0.75px;background:#dcdcdc;opacity:0.34"></div><div style="position:absolute;left:687.06px;top:52.12px;width:5.61px;height:0.75px;background:#e07c9e;opacity:0.34"></div><div style="position:absolute;left:692.67px;top:52.12px;width:0.51px;height:0.75px;background:#dcdcdc;opacity:0.34"></div><div style="position:absolute;left:686.04px;top:53.14px;width:0.51px;height:0.75px;background:#e07c9e;opacity:0.34"></div><div style="position:absolute;left:686.55px;top:53.14px;width:0.51px;height:0.75px;background:#dcdcdc;opacity:0.34"></div><div style="position:absolute;left:687.06px;top:53.14px;width:5.10px;height:0.75px;background:#e07c9e;opacity:0.34"></div><div style="position:absolute;left:692.67px;top:53.14px;width:1.02px;height:0.75px;background:#569cd6;opacity:0.34"></div><div style="position:absolute;left:694.20px;top:53.14px;width:5.61px;height:0.75px;background:#dcdcdc;opacity:0.34"></div><div style="position:absolute;left:686.04px;top:54.16px;width:0.51px;height:0.75px;background:#e07c9e;opacity:0.34"></div><div style="position:absolute;left:686.55px;top:54.16px;width:0.51px;height:0.75px;background:#dcdcdc;opacity:0.34"></div><div style="position:absolute;left:687.06px;top:54.16px;width:4.08px;height:0.75px;background:#e07c9e;opacity:0.34"></div><div style="position:absolute;left:691.14px;top:54.16px;width:0.51px;height:0.75px;background:#dcdcdc;opacity:0.34"></div><div style="position:absolute;left:686.04px;top:56.20px;width:1.02px;height:0.75px;background:#dcdcdc;opacity:0.34"></div><div style="position:absolute;left:687.57px;top:56.20px;width:4.59px;height:0.75px;background:#5ca61e;opacity:0.34"></div><div style="position:absolute;left:692.67px;top:56.20px;width:4.59px;height:0.75px;background:#5ca61e;opacity:0.34"></div><div style="position:absolute;left:697.77px;top:56.20px;width:2.04px;height:0.75px;background:#5ca61e;opacity:0.34"></div><div style="position:absolute;left:700.32px;top:56.20px;width:0.51px;height:0.75px;background:#5ca61e;opacity:0.34"></div><div style="position:absolute;left:701.34px;top:56.20px;width:1.02px;height:0.75px;background:#5ca61e;opacity:0.34"></div><div style="position:absolute;left:702.87px;top:56.20px;width:3.57px;height:0.75px;background:#5ca61e;opacity:0.34"></div><div style="position:absolute;left:706.95px;top:56.20px;width:2.55px;height:0.75px;background:#5ca61e;opacity:0.34"></div><div style="position:absolute;left:710.01px;top:56.20px;width:2.04px;height:0.75px;background:#5ca61e;opacity:0.34"></div><div style="position:absolute;left:712.56px;top:56.20px;width:3.57px;height:0.75px;background:#5ca61e;opacity:0.34"></div><div style="position:absolute;left:686.04px;top:57.22px;width:4.08px;height:0.75px;background:#dcdcdc;opacity:0.34"></div><div style="position:absolute;left:690.12px;top:57.22px;width:0.51px;height:0.75px;background:#d8935f;opacity:0.34"></div><div style="position:absolute;left:690.63px;top:57.22px;width:0.51px;height:0.75px;background:#e07c9e;opacity:0.34"></div><div style="position:absolute;left:691.14px;top:57.22px;width:0.51px;height:0.75px;background:#dcdcdc;opacity:0.34"></div><div style="position:absolute;left:691.65px;top:57.22px;width:5.61px;height:0.75px;background:#e07c9e;opacity:0.34"></div><div style="position:absolute;left:697.26px;top:57.22px;width:0.51px;height:0.75px;background:#dcdcdc;opacity:0.34"></div><div style="position:absolute;left:698.28px;top:57.22px;width:1.02px;height:0.75px;background:#e07c9e;opacity:0.34"></div><div style="position:absolute;left:699.30px;top:57.22px;width:0.51px;height:0.75px;background:#d8935f;opacity:0.34"></div><div style="position:absolute;left:700.32px;top:57.22px;width:1.02px;height:0.75px;background:#569cd6;opacity:0.34"></div><div style="position:absolute;left:701.85px;top:57.22px;width:6.12px;height:0.75px;background:#dcdcdc;opacity:0.34"></div><div style="position:absolute;left:686.04px;top:58.24px;width:4.08px;height:0.75px;background:#dcdcdc;opacity:0.34"></div><div style="position:absolute;left:690.12px;top:58.24px;width:0.51px;height:0.75px;background:#d8935f;opacity:0.34"></div><div style="position:absolute;left:690.63px;top:58.24px;width:0.51px;height:0.75px;background:#e07c9e;opacity:0.34"></div><div style="position:absolute;left:691.14px;top:58.24px;width:0.51px;height:0.75px;background:#dcdcdc;opacity:0.34"></div><div style="position:absolute;left:691.65px;top:58.24px;width:6.63px;height:0.75px;background:#e07c9e;opacity:0.34"></div><div style="position:absolute;left:698.28px;top:58.24px;width:0.51px;height:0.75px;background:#dcdcdc;opacity:0.34"></div><div style="position:absolute;left:699.30px;top:58.24px;width:4.59px;height:0.75px;background:#d8935f;opacity:0.34"></div><div style="position:absolute;left:703.89px;top:58.24px;width:0.51px;height:0.75px;background:#d8935f;opacity:0.34"></div><div style="position:absolute;left:704.91px;top:58.24px;width:1.02px;height:0.75px;background:#569cd6;opacity:0.34"></div><div style="position:absolute;left:706.44px;top:58.24px;width:7.14px;height:0.75px;background:#dcdcdc;opacity:0.34"></div><div style="position:absolute;left:686.04px;top:59.26px;width:4.08px;height:0.75px;background:#dcdcdc;opacity:0.34"></div><div style="position:absolute;left:690.12px;top:59.26px;width:0.51px;height:0.75px;background:#d8935f;opacity:0.34"></div><div style="position:absolute;left:690.63px;top:59.26px;width:0.51px;height:0.75px;background:#e07c9e;opacity:0.34"></div><div style="position:absolute;left:691.14px;top:59.26px;width:0.51px;height:0.75px;background:#dcdcdc;opacity:0.34"></div><div style="position:absolute;left:691.65px;top:59.26px;width:3.06px;height:0.75px;background:#e07c9e;opacity:0.34"></div><div style="position:absolute;left:694.71px;top:59.26px;width:0.51px;height:0.75px;background:#dcdcdc;opacity:0.34"></div><div style="position:absolute;left:695.73px;top:59.26px;width:4.59px;height:0.75px;background:#d8935f;opacity:0.34"></div><div style="position:absolute;left:700.32px;top:59.26px;width:0.51px;height:0.75px;background:#d8935f;opacity:0.34"></div><div style="position:absolute;left:701.34px;top:59.26px;width:1.02px;height:0.75px;background:#569cd6;opacity:0.34"></div><div style="position:absolute;left:702.87px;top:59.26px;width:6.63px;height:0.75px;background:#dcdcdc;opacity:0.34"></div><div style="position:absolute;left:684.00px;top:60.28px;width:2.04px;height:0.75px;background:#569cd6;opacity:0.34"></div><div style="position:absolute;left:686.55px;top:60.28px;width:1.02px;height:0.75px;background:#d8935f;opacity:0.34"></div><div style="position:absolute;left:688.08px;top:60.28px;width:1.53px;height:0.75px;background:#9cdcfe;opacity:0.34"></div><div style="position:absolute;left:689.61px;top:60.28px;width:0.51px;height:0.75px;background:#d8935f;opacity:0.34"></div><div style="position:absolute;left:690.12px;top:60.28px;width:10.20px;height:0.75px;background:#d8935f;opacity:0.34"></div><div style="position:absolute;left:700.32px;top:60.28px;width:0.51px;height:0.75px;background:#d8935f;opacity:0.34"></div><div style="position:absolute;left:701.34px;top:60.28px;width:1.02px;height:0.75px;background:#d8935f;opacity:0.34"></div><div style="position:absolute;left:702.87px;top:60.28px;width:0.51px;height:0.75px;background:#dcdcdc;opacity:0.34"></div><div style="position:absolute;left:686.04px;top:61.30px;width:2.04px;height:0.75px;background:#569cd6;opacity:0.34"></div><div style="position:absolute;left:688.59px;top:61.30px;width:2.04px;height:0.75px;background:#569cd6;opacity:0.34"></div><div style="position:absolute;left:691.14px;top:61.30px;width:1.02px;height:0.75px;background:#d8935f;opacity:0.34"></div><div style="position:absolute;left:692.67px;top:61.30px;width:3.06px;height:0.75px;background:#9cdcfe;opacity:0.34"></div><div style="position:absolute;left:695.73px;top:61.30px;width:0.51px;height:0.75px;background:#d8935f;opacity:0.34"></div><div style="position:absolute;left:696.24px;top:61.30px;width:9.18px;height:0.75px;background:#d8935f;opacity:0.34"></div><div style="position:absolute;left:705.42px;top:61.30px;width:0.51px;height:0.75px;background:#dcdcdc;opacity:0.34"></div><div style="position:absolute;left:706.44px;top:61.30px;width:15.81px;height:0.75px;background:#d8935f;opacity:0.34"></div><div style="position:absolute;left:722.25px;top:61.30px;width:0.51px;height:0.75px;background:#d8935f;opacity:0.34"></div><div style="position:absolute;left:723.27px;top:61.30px;width:1.02px;height:0.75px;background:#d8935f;opacity:0.34"></div><div style="position:absolute;left:724.80px;top:61.30px;width:0.51px;height:0.75px;background:#dcdcdc;opacity:0.34"></div><div style="position:absolute;left:688.08px;top:62.32px;width:1.02px;height:0.75px;background:#569cd6;opacity:0.34"></div><div style="position:absolute;left:689.61px;top:62.32px;width:0.51px;height:0.75px;background:#d8935f;opacity:0.34"></div><div style="position:absolute;left:690.12px;top:62.32px;width:0.51px;height:0.75px;background:#e07c9e;opacity:0.34"></div><div style="position:absolute;left:690.63px;top:62.32px;width:0.51px;height:0.75px;background:#dcdcdc;opacity:0.34"></div><div style="position:absolute;left:691.14px;top:62.32px;width:5.61px;height:0.75px;background:#e07c9e;opacity:0.34"></div><div style="position:absolute;left:697.26px;top:62.32px;width:0.51px;height:0.75px;background:#dcdcdc;opacity:0.34"></div><div style="position:absolute;left:698.28px;top:62.32px;width:0.51px;height:0.75px;background:#e07c9e;opacity:0.34"></div><div style="position:absolute;left:698.79px;top:62.32px;width:0.51px;height:0.75px;background:#dcdcdc;opacity:0.34"></div><div style="position:absolute;left:699.30px;top:62.32px;width:5.61px;height:0.75px;background:#e07c9e;opacity:0.34"></div><div style="position:absolute;left:704.91px;top:62.32px;width:0.51px;height:0.75px;background:#d8935f;opacity:0.34"></div><div style="position:absolute;left:684.00px;top:63.34px;width:2.55px;height:0.75px;background:#569cd6;opacity:0.34"></div><div style="position:absolute;left:687.06px;top:63.34px;width:0.51px;height:0.75px;background:#e07c9e;opacity:0.34"></div><div style="position:absolute;left:687.57px;top:63.34px;width:0.51px;height:0.75px;background:#dcdcdc;opacity:0.34"></div><div style="position:absolute;left:688.08px;top:63.34px;width:5.10px;height:0.75px;background:#e07c9e;opacity:0.34"></div><div style="position:absolute;left:693.69px;top:63.34px;width:0.51px;height:0.75px;background:#dcdcdc;opacity:0.34"></div><div style="position:absolute;left:694.71px;top:63.34px;width:5.10px;height:0.75px;background:#d8935f;opacity:0.34"></div><div style="position:absolute;left:743.4px;top:45.8px;width:0.8px;height:236px;background:#221918;"></div><div style="position:absolute;left:743.4px;top:45.8px;width:6.6px;height:0.8px;background:#241f19;"></div><div style="position:absolute;left:742.4px;top:45.8px;width:1px;height:236px;background:#131011;"></div><div style="position:absolute;left:743.8px;top:139.3px;width:6.2px;height:2.6px;background:#b8b8b8;"></div><div style="position:absolute;left:171px;top:281px;width:579px;height:113px;background:#181415;"></div><div style="position:absolute;left:171px;top:281px;width:579px;height:0.8px;background:#3a3a3a;"></div><div style="position:absolute;left:180.7px;top:285.7px;height:11.0px;line-height:11.0px;font-family:'Liberation Sans', sans-serif;font-size:5.5px;color:#9a9a9a;font-weight:normal;white-space:pre;-webkit-text-stroke:0.15px #9a9a9a;transform:scaleY(1.08)">PROBLEMS</div><div style="position:absolute;left:223.8px;top:285.7px;height:11.0px;line-height:11.0px;font-family:'Liberation Sans', sans-serif;font-size:5.5px;color:#9a9a9a;font-weight:normal;white-space:pre;-webkit-text-stroke:0.15px #9a9a9a;transform:scaleY(1.08)">OUTPUT</div><div style="position:absolute;left:259.6px;top:285.7px;height:11.0px;line-height:11.0px;font-family:'Liberation Sans', sans-serif;font-size:5.5px;color:#9a9a9a;font-weight:normal;white-space:pre;-webkit-text-stroke:0.15px #9a9a9a;transform:scaleY(1.08)">DEBUG CONSOLE</div><div style="position:absolute;left:320.2px;top:285.7px;height:11.0px;line-height:11.0px;font-family:'Liberation Sans', sans-serif;font-size:5.5px;color:#e0e0e0;font-weight:normal;white-space:pre;-webkit-text-stroke:0.15px #e0e0e0;transform:scaleY(1.08)">TERMINAL</div><div style="position:absolute;left:360.3px;top:285.7px;height:11.0px;line-height:11.0px;font-family:'Liberation Sans', sans-serif;font-size:5.5px;color:#9a9a9a;font-weight:normal;white-space:pre;-webkit-text-stroke:0.15px #9a9a9a;transform:scaleY(1.08)">PORTS</div><div style="position:absolute;left:391.6px;top:285.7px;height:11.0px;line-height:11.0px;font-family:'Liberation Sans', sans-serif;font-size:5.5px;color:#9a9a9a;font-weight:normal;white-space:pre;-webkit-text-stroke:0.15px #9a9a9a;transform:scaleY(1.08)">LINEAGE</div><div style="position:absolute;left:427.5px;top:285.7px;height:11.0px;line-height:11.0px;font-family:'Liberation Sans', sans-serif;font-size:5.5px;color:#9a9a9a;font-weight:normal;white-space:pre;-webkit-text-stroke:0.15px #9a9a9a;transform:scaleY(1.08)">QUERY RESULTS</div><div style="position:absolute;left:319px;top:295.5px;width:31.1px;height:0.9px;background:#d0d0d0;"></div><div style="position:absolute;left:743.5px;top:301.2px;width:0.9px;height:92.5px;background:#4d1d14;"></div><div style="position:absolute;left:743.5px;top:301.2px;width:6.5px;height:0.9px;background:#4d1d14;"></div><div style="position:absolute;left:180.7px;top:299.74px;height:11.92px;line-height:11.92px;font-family:'Liberation Mono', monospace;font-size:5.96px;color:#e8e8e8;font-weight:normal;white-space:pre;-webkit-text-stroke:0.15px #e8e8e8;-webkit-text-stroke:0.1px #e8e8e8;transform:scaleY(1.12)">(base) saragawlinski@Saras-Laptop moms-flower-shop %</div><svg style="position:absolute;left:630px;top:286px" width="115" height="10" viewBox="0 0 115 10"><rect x="0.8" y="0.8" width="7.6" height="7.6" rx="1.2" stroke="#bdbdbd" stroke-width="0.8" fill="none"/><path d="M2.6,3 L4,4.4 L2.6,5.8 M4.5,6.6 H6.5" stroke="#bdbdbd" stroke-width="0.7" fill="none"/><path d="M29.35,1 V8.2 M25.9,4.6 H32.8" stroke="#bdbdbd" stroke-width="0.85" fill="none"/><path d="M36.2,3.9 L37.85,5.4 L39.5,3.9" stroke="#bdbdbd" stroke-width="0.65" fill="none"/><rect x="45.3" y="0.9" width="7.6" height="7.6" rx="1.6" stroke="#bdbdbd" stroke-width="0.8" fill="none"/><path d="M49.1,1 V8.5" stroke="#bdbdbd" stroke-width="0.8"/><path d="M59.3,2.2 H66.3 M61.5,2 V1 H64.1 V2 M60.2,2.5 L60.8,8.5 H64.8 L65.4,2.5 M62,3.8 V7.2 M63.6,3.8 V7.2" stroke="#bdbdbd" stroke-width="0.7" fill="none"/><path d="M72.7,4.7 H79.3" stroke="#bdbdbd" stroke-width="0.8"/><path d="M85.5,1 V8.6" stroke="#8a8a8a" stroke-width="0.8"/><path d="M92.3,3 V1 H94.3 M97.5,1 H99.5 V3 M99.5,6.4 V8.4 H97.5 M94.3,8.4 H92.3 V6.4" stroke="#bdbdbd" stroke-width="0.8" fill="none"/><path d="M106.6,2 L112,7.4 M112,2 L106.6,7.4" stroke="#bdbdbd" stroke-width="0.8"/></svg><div style="position:absolute;left:641.1px;top:285.29999999999995px;height:11.2px;line-height:11.2px;font-family:'Liberation Sans', sans-serif;font-size:5.6px;color:#d8d8d8;font-weight:bold;white-space:pre;-webkit-text-stroke:0.15px #d8d8d8;">zsh</div><svg style="position:absolute;left:244px;top:255px;overflow:visible" width="16" height="22" viewBox="0 0 16 22"><path d="M1.2,1.2 L1.2,18.5 L5.2,14.6 L8.2,21 L11,19.8 L8.1,13.6 L13.6,13.3 Z" fill="#000" stroke="#fff" stroke-width="1.1" stroke-linejoin="round"/></svg><div style="position:absolute;left:0px;top:393.6px;width:750px;height:11.4px;background:#4e4b4c;"></div><div style="position:absolute;left:0px;top:393.2px;width:750px;height:0.7px;background:#0c0a0b;"></div><div style="position:absolute;left:0px;top:404px;width:750px;height:1px;background:#5e5c5c;"></div><svg style="position:absolute;left:0px;top:392px" width="14" height="13" viewBox="0 0 14 13"><path d="M5.8,7.6 L7.9,9 L5.8,10.6 M11.2,6 L9.1,7.4 L11.2,8.9" stroke="#dcdcdc" stroke-width="0.9" fill="none"/></svg><svg style="position:absolute;left:20.8px;top:396.3px" width="30" height="8" viewBox="0 0 30 8"><circle cx="3.7" cy="3.4" r="3.1" stroke="#dcdcdc" stroke-width="0.85" fill="none"/><path d="M2.5,2.2 L4.9,4.6 M4.9,2.2 L2.5,4.6" stroke="#dcdcdc" stroke-width="0.8"/><path d="M19.1,0.4 L22.8,6.6 H15.4 Z" stroke="#dcdcdc" stroke-width="0.85" fill="none" stroke-linejoin="round"/></svg><div style="position:absolute;left:30.6px;top:393.6px;height:12.8px;line-height:12.8px;font-family:'Liberation Sans', sans-serif;font-size:6.4px;color:#dcdcdc;font-weight:normal;white-space:pre;-webkit-text-stroke:0.15px #dcdcdc;">0</div><div style="position:absolute;left:45.6px;top:393.6px;height:12.8px;line-height:12.8px;font-family:'Liberation Sans', sans-serif;font-size:6.4px;color:#dcdcdc;font-weight:normal;white-space:pre;-webkit-text-stroke:0.15px #dcdcdc;">0</div><svg style="position:absolute;left:57.5px;top:396px" width="8.5" height="8.5" viewBox="-0.5 -0.5 11 11"><path d="M1.2,1.2 C2.4,0 3.6,1.2 5,2.5 C6.4,1.2 7.6,0 8.8,1.2 C10,2.4 8.8,3.6 7.5,5 C8.8,6.4 10,7.6 8.8,8.8 C7.6,10 6.4,8.8 5,7.5 C3.6,8.8 2.4,10 1.2,8.8 C0,7.6 1.2,6.4 2.5,5 C1.2,3.6 0,2.4 1.2,1.2 Z" stroke="#dcdcdc" stroke-width="0.9" fill="none"/></svg><div style="position:absolute;left:68px;top:393.56px;height:12.88px;line-height:12.88px;font-family:'Liberation Sans', sans-serif;font-size:6.44px;color:#dcdcdc;font-weight:normal;white-space:pre;-webkit-text-stroke:0.15px #dcdcdc;">dbt Extension</div><div style="position:absolute;left:553.4px;top:393.7px;height:12.6px;line-height:12.6px;font-family:'Liberation Sans', sans-serif;font-size:6.3px;color:#dcdcdc;font-weight:normal;white-space:pre;-webkit-text-stroke:0.15px #dcdcdc;">Ln 19, Col 1</div><div style="position:absolute;left:597.4px;top:393.7px;height:12.6px;line-height:12.6px;font-family:'Liberation Sans', sans-serif;font-size:6.3px;color:#dcdcdc;font-weight:normal;white-space:pre;-webkit-text-stroke:0.15px #dcdcdc;">Spaces: 4</div><div style="position:absolute;left:633.8px;top:393.7px;height:12.6px;line-height:12.6px;font-family:'Liberation Sans', sans-serif;font-size:6.3px;color:#dcdcdc;font-weight:normal;white-space:pre;-webkit-text-stroke:0.15px #dcdcdc;">UTF-8</div><div style="position:absolute;left:661px;top:393.7px;height:12.6px;line-height:12.6px;font-family:'Liberation Sans', sans-serif;font-size:6.3px;color:#dcdcdc;font-weight:normal;white-space:pre;-webkit-text-stroke:0.15px #dcdcdc;">LF</div><div style="position:absolute;left:677px;top:393.7px;height:12.6px;line-height:12.6px;font-family:'Liberation Sans', sans-serif;font-size:6.3px;color:#dcdcdc;font-weight:normal;white-space:pre;-webkit-text-stroke:0.15px #dcdcdc;">{ }</div><div style="position:absolute;left:687px;top:393.7px;height:12.6px;line-height:12.6px;font-family:'Liberation Sans', sans-serif;font-size:6.3px;color:#dcdcdc;font-weight:normal;white-space:pre;-webkit-text-stroke:0.15px #dcdcdc;">Jinja SQL</div><svg style="position:absolute;left:721.5px;top:395.3px" width="10.5" height="8.5" viewBox="0 0 10.5 8.5"><path d="M1.3,3.4 C0.8,1.1 1.9,0.5 3.3,0.6 C4.5,0.7 5.1,1.4 5.25,2.5 C5.4,1.4 6,0.7 7.2,0.6 C8.6,0.5 9.7,1.1 9.2,3.4 Z" stroke="#dcdcdc" stroke-width="0.95" fill="none"/><path d="M1,3.3 C0.4,4.1 0.5,5.6 1.1,6.4 C2.6,7.9 7.9,7.9 9.4,6.4 C10,5.6 10.1,4.1 9.5,3.3" stroke="#dcdcdc" stroke-width="0.95" fill="none"/><path d="M4.1,4.5 V6 M6.4,4.5 V6" stroke="#dcdcdc" stroke-width="0.9"/></svg><svg style="position:absolute;left:739.2px;top:395.6px" width="8" height="8.5" viewBox="0 0 9 8.5"><path d="M1,6.2 H8 C7.2,5.4 7,4.8 7,3.6 C7,1.8 5.8,0.8 4.5,0.8 C3.2,0.8 2,1.8 2,3.6 C2,4.8 1.8,5.4 1,6.2 Z M3.5,7.4 H5.5" stroke="#dcdcdc" stroke-width="0.95" fill="none"/></svg></div></body></html>
